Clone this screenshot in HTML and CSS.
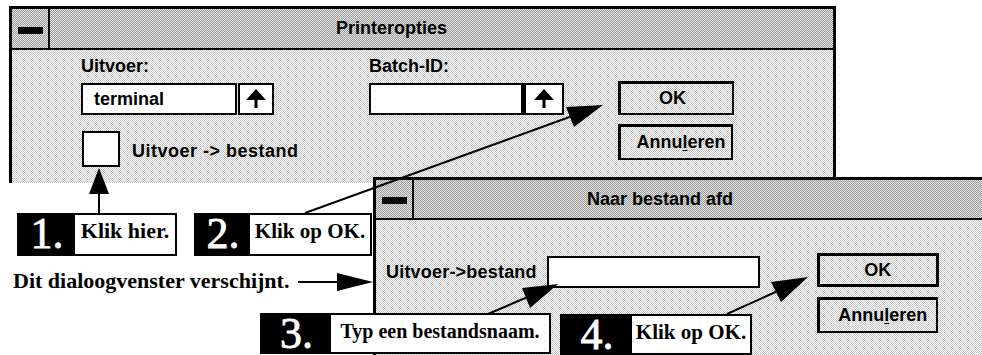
FILE: index.html
```html
<!DOCTYPE html>
<html lang="nl">
<head>
    <meta charset="UTF-8">
    <title>Naar bestand afdrukken</title>
    <link rel="stylesheet" href="styles.css">
</head>
<body>

<div class="desk">

    <!-- eerste venster: printeropties -->
    <section class="win win-print">
        <div class="bar">
            <div class="close"><span class="dash"></span></div>
            <div class="title title-print">Printeropties</div>
        </div>
        <div class="pane pane-print">
            <div class="col col-out">
                <div class="lbl">Uitvoer:</div>
                <div class="combo">
                    <div class="fld fld-out">terminal</div>
                    <div class="spin spin-out">
                        <svg width="20" height="20" viewBox="0 0 20 20"><polygon points="10,0 20,11 0,11"/><rect x="8.5" y="10" width="3" height="9"/></svg>
                    </div>
                </div>
                <div class="check-row">
                    <div class="check"></div>
                    <span>Uitvoer -&gt; bestand</span>
                </div>
            </div>
            <div class="col col-batch">
                <div class="lbl">Batch-ID:</div>
                <div class="combo">
                    <div class="fld fld-batch"></div>
                    <div class="spin spin-batch">
                        <svg width="20" height="20" viewBox="0 0 20 20"><polygon points="10,0 20,11 0,11"/><rect x="8.5" y="10" width="3" height="9"/></svg>
                    </div>
                </div>
            </div>
            <div class="col col-btns">
                <div class="btn btn-ok">OK</div>
                <div class="btn btn-cancel">Annu<u>l</u>eren</div>
            </div>
        </div>
    </section>

    <!-- tweede venster: naar bestand -->
    <section class="win win-file">
        <div class="bar">
            <div class="close"><span class="dash"></span></div>
            <div class="title title-file">Naar bestand afd</div>
        </div>
        <div class="pane pane-file">
            <div class="file-row">
                <span class="lbl-file">Uitvoer-&gt;bestand</span>
                <div class="fld fld-file"></div>
            </div>
            <div class="col col-btns2">
                <div class="btn btn-ok2">OK</div>
                <div class="btn btn-cancel2">Annu<u>l</u>eren</div>
            </div>
        </div>
    </section>

    <!-- stappen -->
    <div class="tag tag-1"><span class="num">1.</span><span class="say">Klik hier.</span></div>
    <div class="tag tag-2"><span class="num">2.</span><span class="say">Klik op OK.</span></div>
    <div class="tag tag-3"><span class="num">3.</span><span class="say">Typ een bestandsnaam.</span></div>
    <div class="tag tag-4"><span class="num">4.</span><span class="say">Klik op OK.</span></div>

    <p class="note">Dit dialoogvenster verschijnt.</p>

    <svg class="arrows" width="982" height="355" viewBox="0 0 982 355">
        <!-- 1 -->
        <line x1="99" y1="213" x2="99" y2="190"/>
        <polygon points="99,168 109,194 89,194"/>
        <!-- 2 -->
        <line x1="305" y1="213" x2="575" y2="115"/>
        <polygon points="603,105 574,127 566,107"/>
        <!-- dialoog -->
        <line x1="298" y1="282" x2="340" y2="282"/>
        <polygon points="373,282 337,273 337,291"/>
        <!-- 3 -->
        <line x1="488" y1="314" x2="530" y2="296"/>
        <polygon points="558,284 530,308 522,288"/>
        <!-- 4 -->
        <line x1="727" y1="314" x2="780" y2="290"/>
        <polygon points="808,277 781,302 771,282"/>
    </svg>

</div>

</body>
</html>
```

FILE: styles.css
```css
body {
    margin: 0;
    background: #fff;
    font-family: "Liberation Sans", Arial, sans-serif;
    font-weight: bold;
    font-size: 18px;
    color: #000;
}
.desk {
    position: relative;
    width: 982px;
    height: 355px;
    overflow: hidden;
}

/* vensters */
.win {
    position: absolute;
    box-sizing: border-box;
    border-top: 3px solid #000;
    border-left: 3px solid #000;
}
.win-print {
    left: 9px;
    top: 6px;
    width: 827px;
    height: 177px;
    border-right: 3px solid #000;
}
.win-file {
    left: 373px;
    top: 177px;
    width: 640px;
    height: 200px;
}
.bar {
    display: flex;
    height: 38px;
    border-bottom: 2px solid #000;
    background: #d6d6d6 url("data:image/svg+xml,%3Csvg xmlns='http://www.w3.org/2000/svg' width='2' height='2' shape-rendering='crispEdges'%3E%3Crect width='2' height='2' fill='%23e6e6e6'/%3E%3Crect width='1' height='1' fill='%23999'/%3E%3Crect x='1' y='1' width='1' height='1' fill='%23999'/%3E%3C/svg%3E") 0 0 / 2px 2px;
}
.win-print .bar {
    height: 39px;
}
.close {
    width: 36px;
    border-right: 2px solid #000;
    display: flex;
    align-items: center;
    justify-content: center;
}
.dash {
    width: 25px;
    height: 7px;
    background: #000;
    margin-top: 3px;
}
.title {
    line-height: 38px;
}
.title-print {
    padding-left: 286px;
}
.title-file {
    padding-left: 173px;
}
.pane {
    background: #e8e8e8 url("data:image/svg+xml,%3Csvg xmlns='http://www.w3.org/2000/svg' width='2' height='2' shape-rendering='crispEdges'%3E%3Crect width='2' height='2' fill='%23fff'/%3E%3Crect width='1' height='1' fill='%23c4c4c4'/%3E%3Crect x='1' y='1' width='1' height='1' fill='%23c4c4c4'/%3E%3C/svg%3E") 0 0 / 2px 2px;
}
.pane-print {
    display: flex;
    height: 133px;
    padding-left: 69px;
}
.pane-file {
    display: flex;
    height: 160px;
    padding-left: 10px;
    padding-top: 33px;
}

/* velden */
.col {
    display: flex;
    flex-direction: column;
}
.col-out {
    width: 288px;
}
.col-batch {
    width: 249px;
}
.lbl {
    line-height: 22px;
    margin-top: 5px;
}
.combo {
    display: flex;
    margin-top: 6px;
}
.fld {
    box-sizing: border-box;
    height: 32px;
    border: 2px solid #000;
    background: #fff;
}
.fld-out {
    width: 156px;
    padding-left: 11px;
    line-height: 28px;
}
.fld-batch {
    width: 154px;
}
.spin {
    box-sizing: border-box;
    height: 32px;
    border: 2px solid #000;
    background: #fff;
    display: flex;
    align-items: center;
    justify-content: center;
}
.spin-out {
    width: 36px;
    margin-left: 1px;
}
.spin-batch {
    width: 41px;
    border-left-width: 3px;
}
.check-row {
    display: flex;
    align-items: center;
    margin-top: 16px;
    margin-left: 1px;
}
.check {
    box-sizing: border-box;
    width: 38px;
    height: 36px;
    border: 2px solid #000;
    background: #fff;
    margin-right: 12px;
}
.check-row span {
    margin-top: 4px;
    letter-spacing: 0.5px;
}

/* knoppen */
.col-btns {
    padding-top: 31px;
    gap: 9px;
}
.btn {
    box-sizing: border-box;
    border: 2px solid #000;
    border-left-width: 3px;
    border-top-width: 3px;
    text-align: center;
}
.btn-ok {
    width: 116px;
    height: 34px;
    line-height: 29px;
    padding-right: 8px;
}
.btn-cancel {
    width: 115px;
    height: 36px;
    line-height: 31px;
    padding-left: 10px;
}
.btn u {
    text-underline-offset: 2px;
}

.file-row {
    display: flex;
    align-items: center;
    height: 32px;
    margin-top: 3px;
}
.lbl-file {
    font-size: 18px;
    margin-right: 10px;
    letter-spacing: 0.2px;
}
.fld-file {
    width: 213px;
}
.col-btns2 {
    margin-left: 57px;
    gap: 10px;
}
.btn-ok2 {
    width: 122px;
    height: 34px;
    line-height: 29px;
    border-width: 3px;
}
.btn-cancel2 {
    width: 121px;
    height: 36px;
    line-height: 31px;
    padding-left: 10px;
}

/* stappen */
.tag {
    position: absolute;
    display: flex;
    box-sizing: border-box;
    height: 43px;
    border: 2px solid #000;
    font-family: "Liberation Serif", "Times New Roman", serif;
    background: #fff;
    white-space: nowrap;
}
.tag-1 { left: 17px; top: 213px; }
.tag-2 { left: 194px; top: 213px; }
.tag-3 { left: 260px; top: 313px; height: 41px; }
.tag-4 { left: 560px; top: 314px; height: 41px; }
.num {
    background: #000;
    color: #fff;
    font-weight: normal;
    font-size: 44px;
    line-height: 38px;
    text-align: center;
    -webkit-text-stroke: 0.8px #fff;
}
.tag-1 .num { width: 56px; }
.tag-2 .num { width: 54px; }
.tag-3 .num { width: 69px; }
.tag-4 .num { width: 70px; }
.say {
    font-size: 21px;
    line-height: 32px;
    text-align: center;
}
.tag-1 .say { width: 100px; font-size: 22px; }
.tag-2 .say { width: 120px; }
.tag-3 .say { width: 218px; font-size: 20px; }
.tag-4 .say { width: 118px; }

.note {
    position: absolute;
    left: 13px;
    top: 269px;
    margin: 0;
    font-family: "Liberation Serif", "Times New Roman", serif;
    font-size: 22px;
    line-height: 24px;
}

.arrows {
    position: absolute;
    left: 0;
    top: 0;
    pointer-events: none;
}
.arrows line {
    stroke: #000;
    stroke-width: 2;
}
.arrows polygon {
    fill: #000;
}
```
